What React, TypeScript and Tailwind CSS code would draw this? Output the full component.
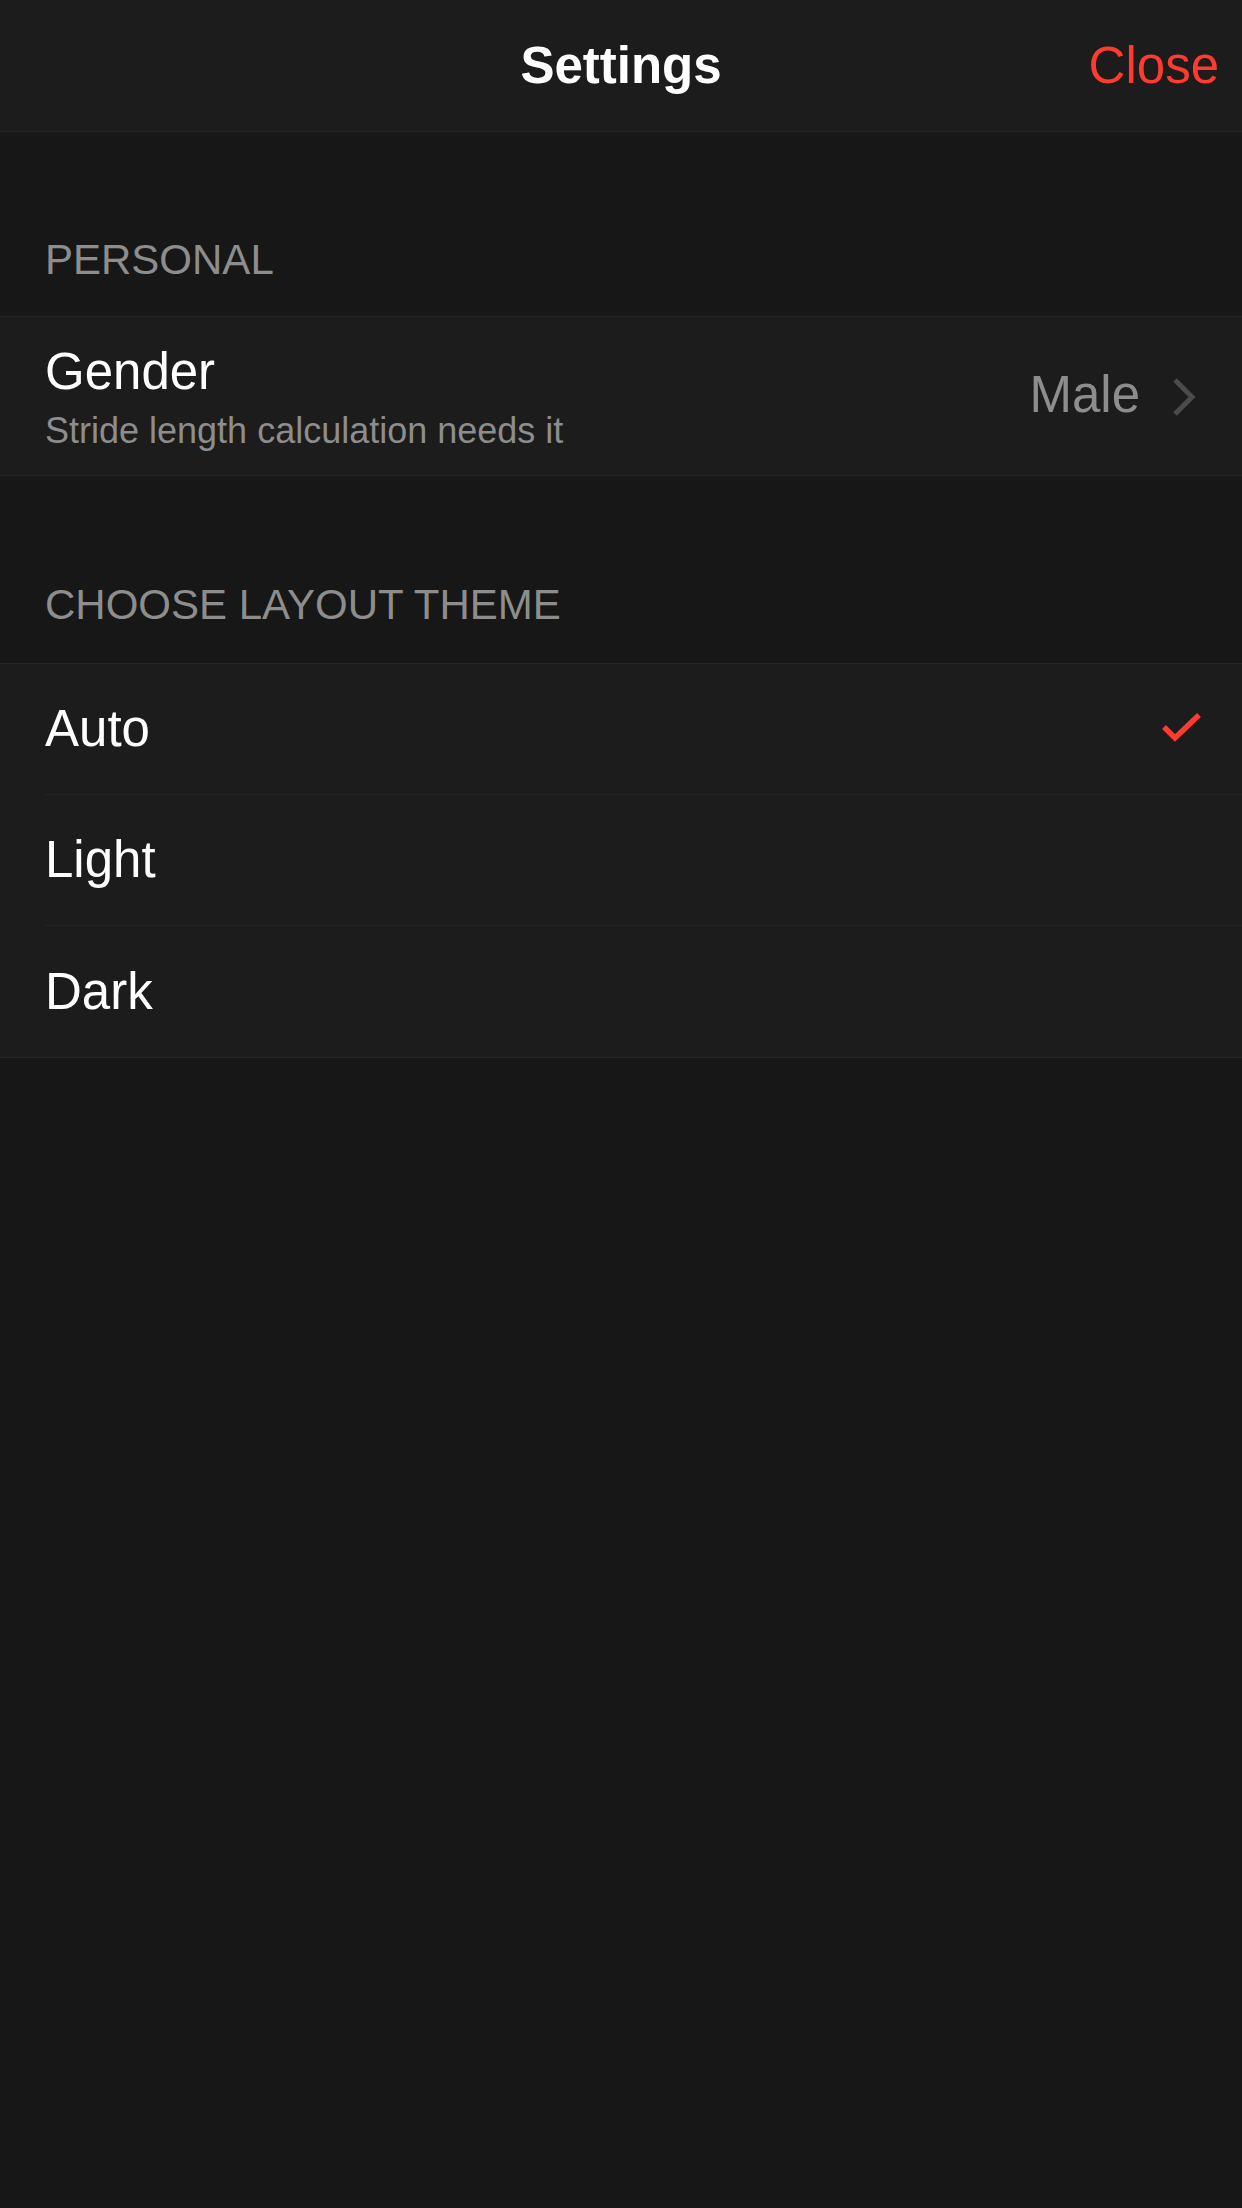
import React, { useState } from 'react';

type Theme = 'auto' | 'light' | 'dark';

const themes: { id: Theme; label: string }[] = [
  { id: 'auto', label: 'Auto' },
  { id: 'light', label: 'Light' },
  { id: 'dark', label: 'Dark' },
];

const SectionHeader: React.FC<{ title: string; className: string }> = ({ title, className }) => (
  <div className={`flex items-end px-[45px] ${className}`}>
    <span className="text-[42px] leading-[46px] text-[#8d8d8d]">{title}</span>
  </div>
);

const Chevron = () => (
  <svg width="26" height="42" viewBox="0 0 26 42" className="ml-[30px] mr-[1px]">
    <path d="M5 3 L22 20 L5 37" fill="none" stroke="#4b4b4b" strokeWidth="5" />
  </svg>
);

const Check = () => (
  <svg width="44" height="34" viewBox="0 0 44 34">
    <path d="M3 15 L14 26 L38 3" fill="none" stroke="#ff3b30" strokeWidth="5.5" />
  </svg>
);

const App: React.FC = () => {
  const [theme, setTheme] = useState<Theme>('auto');

  return (
    <div className="min-h-[2208px] bg-[#171717] font-['Liberation_Sans',Arial,sans-serif]">
      <header className="relative flex h-[132px] items-center justify-center border-b border-[#242424] bg-[#1c1c1c]">
        <h1 className="text-[51px] font-bold leading-[58px] text-white">Settings</h1>
        <button className="absolute right-[23px] text-[51px] leading-[58px] text-[#ff3b30]">Close</button>
      </header>

      <SectionHeader title="PERSONAL" className="h-[184px] pb-[33px]" />

      <div className="flex items-center border-y border-[#242424] bg-[#1c1c1c] pl-[45px] pr-[45px] pt-[26px] pb-[23px]">
        <div className="flex flex-1 flex-col gap-[9px]">
          <span className="text-[51px] leading-[58px] text-white">Gender</span>
          <span className="text-[36px] leading-[42px] text-[#8d8d8d]">Stride length calculation needs it</span>
        </div>
        <span className="-mt-[6px] text-[51px] leading-[58px] text-[#8d8d8d]">Male</span>
        <Chevron />
      </div>

      <SectionHeader title="CHOOSE LAYOUT THEME" className="h-[187px] pb-[35px]" />

      <div className="border-y border-[#242424] bg-[#1c1c1c]">
        {themes.map((t, i) => (
          <button
            key={t.id}
            onClick={() => setTheme(t.id)}
            className="block w-full pl-[45px] text-left"
          >
            <div
              className={`flex h-[131px] items-center pr-[37px] ${
                i < themes.length - 1 ? 'border-b border-[#242424]' : 'h-[130px]'
              }`}
            >
              <span className="flex-1 text-[51px] leading-[58px] text-white">{t.label}</span>
              {theme === t.id && <Check />}
            </div>
          </button>
        ))}
      </div>
    </div>
  );
};

export default App;
